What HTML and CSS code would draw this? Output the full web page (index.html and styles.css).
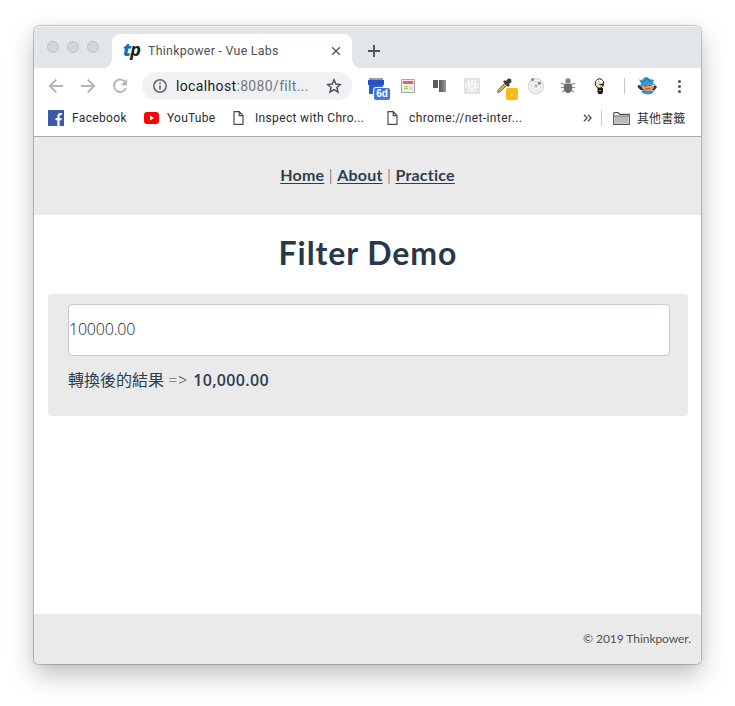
FILE: index.html
```html
<!DOCTYPE html>
<html lang="zh-Hant">
<head>
<meta charset="utf-8">
<title>Thinkpower - Vue Labs</title>
<link rel="stylesheet" href="styles.css">
</head>
<body>
<div class="window">
  <div class="tabstrip">
    <div class="lights"><i></i><i></i><i></i></div>
    <div class="tab">
      <span class="favicon"><b>t</b>p</span>
      <span class="tab-title">Thinkpower - Vue Labs</span>
      <svg class="tab-close" width="10" height="10" viewBox="0 0 10 10"><path d="M1.2 1.2l7.6 7.6M8.8 1.2L1.2 8.8" stroke="#5a5e63" stroke-width="1.5"/></svg>
    </div>
    <svg class="new-tab" width="14" height="14" viewBox="0 0 14 14"><path d="M7 1v12M1 7h12" stroke="#4e5256" stroke-width="1.9"/></svg>
  </div>
  <div class="toolbar">
    <div class="slot"><svg width="16" height="16" viewBox="0 0 16 16"><path d="M15 8H2M8.3 1.5L1.8 8l6.5 6.5" fill="none" stroke="#b3b5b7" stroke-width="1.9"/></svg></div>
    <div class="slot"><svg width="16" height="16" viewBox="0 0 16 16"><path d="M1 8h13M7.7 1.5L14.2 8l-6.5 6.5" fill="none" stroke="#b3b5b7" stroke-width="1.9"/></svg></div>
    <div class="slot"><svg width="16" height="16" viewBox="0 0 16 16"><path d="M13.6 4.7A6.2 6.2 0 1 0 14 10" fill="none" stroke="#b3b5b7" stroke-width="1.9"/><path d="M15 1v6.2H8.8z" fill="#b3b5b7"/></svg></div>
    <div class="omnibox">
      <svg width="14" height="14" viewBox="0 0 14 14"><circle cx="7" cy="7" r="6.2" fill="none" stroke="#5f6368" stroke-width="1.5"/><path d="M7 6.2v4.3M7 3.5v1.6" stroke="#5f6368" stroke-width="1.6"/></svg>
      <span class="url"><b>localhost</b>:8080/filt...</span>
      <svg class="star" width="16" height="16" viewBox="0 0 16 16"><path d="M8 1.8l1.8 4.3 4.6.4-3.5 3 1.1 4.6L8 11.7l-4 2.4 1.1-4.6-3.500-3 4.600-.4z" fill="none" stroke="#505459" stroke-width="1.5"/></svg>
    </div>
    <div class="extensions">
      <div class="slot"><svg width="16" height="16" viewBox="0 0 16 16"><path d="M1 0h14v3H1z" fill="#92969f"/><path d="M2 0v2M5 0v2M8 0v2M11 0v2M14 0v2" stroke="#a4a7ae"/><path d="M0 2h16v5H0z" fill="#2450c8"/><path d="M1 7h14v9H1z" fill="#2c5bd2"/></svg><span class="badge days">6d</span></div>
      <div class="slot"><svg width="14" height="14" viewBox="0 0 14 14"><path d="M.5.5h13v13H.5z" fill="#f1f1f1" stroke="#a6a6a6"/><path d="M2 2h10v3H2z" fill="#ff5555"/><path d="M3 7.5h4M3 9.5h4" stroke="#8fd83c"/><path d="M8 7h4v4H8z" fill="#dedede"/></svg></div>
      <div class="slot"><svg width="14" height="14" viewBox="0 0 14 14"><defs><linearGradient id="bar"><stop stop-color="#555"/><stop offset="1" stop-color="#999"/></linearGradient></defs><path d="M0 1h5v8H0z" fill="#5c5c5c"/><path d="M6 1h7v12H6z" fill="url(#bar)"/></svg></div>
      <div class="slot"><svg width="16" height="16" viewBox="0 0 16 16"><path d="M0 0h16v16H0z" fill="#e2e2e2"/><g fill="none" stroke="#fff" stroke-width=".9"><ellipse cx="8" cy="8" rx="6.5" ry="2.5"/><ellipse cx="8" cy="8" rx="6.5" ry="2.5" transform="rotate(60 8 8)"/><ellipse cx="8" cy="8" rx="6.5" ry="2.5" transform="rotate(120 8 8)"/></g><circle cx="8" cy="8" r="1.2" fill="#fff"/></svg></div>
      <div class="slot"><svg width="16" height="16" viewBox="0 0 16 16"><path d="M1.5 14.5l1-3L9 5l2 2-6.5 6.5z" fill="#d8ae4a" stroke="#6d6d6d"/><path d="M7 3.5l1.5-1.3L10 3l2-2.5 3 .5.5 3L13 6l.7 1.5L12 9z" fill="#3c3c3c"/></svg><span class="badge dot">.</span></div>
      <div class="slot"><svg width="16" height="16" viewBox="0 0 16 16"><g fill="none" stroke="#cdcdcd"><circle cx="8" cy="8" r="7.3" stroke-width="1.2"/><circle cx="8" cy="8" r="4.5"/></g><circle cx="8" cy="8" r="2" fill="#c0c0c0"/><circle cx="4.5" cy="1.7" r="1.6" fill="#8c8c8c"/><circle cx="11.3" cy="5.2" r="1.6" fill="#858585"/></svg></div>
      <div class="slot"><svg width="16" height="16" viewBox="0 0 16 16"><path d="M1 5l4 2M15 5l-4 2M1 9.5h4M15 9.5h-4M2 14l3-2M14 14l-3-2" stroke="#8a8a8a" stroke-width="1.1"/><circle cx="8" cy="3" r="2.7" fill="#858585"/><ellipse cx="8" cy="9.8" rx="4.3" ry="5.2" fill="#6c6c6c"/><path d="M4.5 5.5h7" stroke="#bbb"/></svg></div>
      <div class="slot"><svg width="16" height="16" viewBox="0 0 16 16"><path d="M5.500 10h5.500v4l-1 2H6.500l-1-2z" fill="#191716"/><ellipse cx="7.500" cy="5.500" rx="4.200" ry="4.700" fill="#f0dfaf" stroke="#1b1917"/><path d="M4.500 2.500l3-1 3 1-1 2.500H5z" fill="#fff"/><path d="M6.500 5.500l2 .7 3-1v2l-3 .3z" fill="#1b1917"/><path d="M6 3.500l1.500.5" stroke="#e34037"/><path d="M7 12h2v1H7z" fill="#ba9b6d"/></svg></div>
    </div>
    <div class="rule"></div>
    <svg class="avatar" width="20" height="20" viewBox="0 0 20 20"><path d="M4 16l4-3 6 1 3 2q-6 5-13 0z" fill="#3b8fc4"/><path d="M.5 9.500q3-1.500 4 1l3 4-4-.5q-3-2-3-4.500zM14 13l4-4 2 2-3 4z" fill="#233b61"/><path d="M5 9l10-1 2 4-4 3H9l-4-3z" fill="#ed9b61"/><path d="M2 3.500l3 .5 2-2.500 3-.5 3 2 4 1-1 3 3 2.500-5-1-5 1.500-6 .5 1-3z" fill="#3e96cd"/><path d="M5 6l5-3 4 3" fill="none" stroke="#246b9b"/><path d="M8 12h6l-2 1.500H9z" fill="#d65325"/><path d="M8 10h1.500M12 9.500h1.500" stroke="#543022"/></svg>
    <div class="menu"><i></i><i></i><i></i></div>
  </div>
  <div class="bookmarks">
    <div class="bookmark fb"><svg width="16" height="16" viewBox="0 0 16 16"><path d="M0 0h16v16H0z" fill="#3b5ba9"/><path d="M10.5 16V6.300q0-2.300 2.500-2.300h1M7.500 9.200h6" stroke="#fff" stroke-width="2.2" fill="none"/></svg><span>Facebook</span></div>
    <div class="bookmark yt"><svg width="15" height="12" viewBox="0 0 15 12"><rect width="15" height="12" rx="3" fill="#f00"/><path d="M6 3.5v5L10 6z" fill="#fff"/></svg><span>YouTube</span></div>
    <div class="bookmark inspect"><svg width="11" height="14" viewBox="0 0 11 14"><path d="M1 .7h5.300L10 4.500v8.800H1zM6.200.7v4H10" fill="none" stroke="#4a4d50" stroke-width="1.2"/></svg><span>Inspect with Chro...</span></div>
    <div class="bookmark net"><svg width="11" height="14" viewBox="0 0 11 14"><path d="M1 .7h5.300L10 4.500v8.800H1zM6.200.7v4H10" fill="none" stroke="#4a4d50" stroke-width="1.2"/></svg><span>chrome://net-inter...</span></div>
    <svg class="more" width="9" height="8" viewBox="0 0 9 8"><path d="M1 .8L4 4 1 7.200M5 .8L8 4 5 7.200" fill="none" stroke="#505459" stroke-width="1.4"/></svg>
    <div class="rule"></div>
    <svg class="folder" width="17" height="13" viewBox="0 0 17 13"><path d="M.6 12.400V1.600q0-1 1-1h3.600l1.500 1.800h9.700v10z" fill="#fff" stroke="#505459" stroke-width="1.1"/><path d="M1.500 4.500h14v7h-14z" fill="#b9babb"/><path d="M1 4h15" stroke="#505459"/></svg>
    <span class="others">其他書籤</span>
  </div>
  <div class="page">
    <nav class="nav"><a>Home</a><span>|</span><a>About</a><span>|</span><a>Practice</a></nav>
    <main class="main">
      <h1>Filter Demo</h1>
      <section class="card">
        <div class="field">10000.00</div>
        <p>轉換後的結果 <span>=&gt;</span> <b>10,000.00</b></p>
      </section>
    </main>
    <footer class="footer">© 2019 Thinkpower.</footer>
  </div>
</div>
</body>
</html>
```
FILE: styles.css
```css
* { box-sizing: border-box; }
body { margin: 0; height: 706px; padding: 26px 34px; background: #fff; overflow: hidden; }
svg { display: block; flex: none; }
.window {
  width: 667px; height: 638px; display: flex; flex-direction: column;
  border-radius: 5px; overflow: hidden; background: #fff;
  box-shadow: 0 0 0 1px rgba(0,0,0,.18), 0 11px 26px rgba(0,0,0,.25), 0 0 10px rgba(0,0,0,.05);
  font-family: Roboto, "Noto Sans CJK TC", sans-serif;
}
.tabstrip { height: 42px; flex: none; display: flex; align-items: flex-end; background: #e2e6e9; box-shadow: inset 0 1px #f1f3f4; }
.lights { display: flex; gap: 8px; margin: 0 13px 15px 13px; }
.lights i { width: 12px; height: 12px; border-radius: 50%; background: #d5d5d5; border: 1px solid #c3c3c3; }
.tab { position: relative; width: 240px; height: 34px; display: flex; align-items: center; padding: 0 11px 1px; background: #fff; border-radius: 8px 8px 0 0; }
.tab::before, .tab::after { content: ""; position: absolute; bottom: 0; width: 8px; height: 8px; }
.tab::before { left: -8px; background: radial-gradient(circle at 0 0, transparent 7.5px, #fff 8px); }
.tab::after { right: -8px; background: radial-gradient(circle at 100% 0, transparent 7.5px, #fff 8px); }
.tab-close { margin-top: 1px; }
.favicon { width: 25px; font: italic 700 18px/22px "Open Sans", sans-serif; letter-spacing: -1px; color: #231b1a; margin-top: -3px; }
.favicon b { color: #0876c4; }
.tab-title { flex: 1; font-size: 12.4px; letter-spacing: .27px; color: #4c5054; }
.new-tab { margin: 0 0 10px 15px; }
.toolbar { height: 36px; flex: none; display: flex; align-items: center; padding-left: 6px; }
.slot { position: relative; width: 32px; height: 32px; display: flex; align-items: center; justify-content: center; }
.omnibox { width: 210px; height: 28px; margin: 0 8px 0 6px; display: flex; align-items: center; padding: 0 10px 0 11px; border-radius: 14px; background: #eff1f3; }
.url { flex: 1; margin-left: 9px; font-size: 14px; letter-spacing: .35px; color: #72777c; white-space: nowrap; }
.url b { font-weight: 400; color: #202124; }
.extensions { display: flex; }
.badge { position: absolute; color: #fff; border-radius: 2px; text-align: center; }
.days { left: 14px; top: 18px; width: 16px; height: 12px; background: #3b78e0; box-shadow: 0 0 0 1px #fff; font: 700 10px/12px "Liberation Sans", sans-serif; }
.dot { left: 18px; top: 18px; width: 12px; height: 12px; background: #f6b916; font: 700 10px/9px "Liberation Sans", sans-serif; }
.rule { width: 1px; height: 16px; background: #c5c8ca; flex: none; }
.toolbar .rule { margin-left: 8px; }
.avatar { margin-left: 12px; }
.menu { margin-left: 21px; display: flex; flex-direction: column; gap: 2px; }
.menu i { width: 3px; height: 3px; border-radius: 50%; background: #505459; }
.bookmarks { height: 33px; flex: none; display: flex; align-items: center; padding: 0 0 4px 14px; border-bottom: 1px solid #acacac; font-size: 12px; letter-spacing: .34px; color: #292c30; white-space: nowrap; }
.bookmark { display: flex; align-items: center; flex: none; }
.fb { width: 96px; gap: 8px; }
.yt { width: 89px; gap: 8px; letter-spacing: .24px; }
.inspect { width: 154px; gap: 11px; }
.net { width: 196px; gap: 11px; letter-spacing: .4px; }
.more { margin-right: 9px; }
.folder { margin: 0 7px 0 11px; }
.others { font-size: 12px; letter-spacing: .1px; margin-top: -2px; }
.page { flex: 1; display: flex; flex-direction: column; font-family: Lato, "Noto Sans CJK TC", sans-serif; font-variant-ligatures: none; color: #2c3e50; }
.nav { height: 78px; flex: none; display: flex; justify-content: center; gap: 4.5px; padding-top: 27px; background: #eaeaea; font-size: 16px; line-height: 22px; }
.nav a { font-weight: 700; letter-spacing: .22px; text-decoration: underline; text-underline-offset: 2px; text-decoration-thickness: 1px; }
.nav span { font-weight: 300; }
.main { flex: 1; padding: 16px 13px 0 14px; }
h1 { margin: 0; height: 63px; text-align: center; font-size: 32px; line-height: 44px; font-weight: 700; letter-spacing: .95px; color: #273849; }
.card { height: 122px; padding: 10px 18px 0 20px; border-radius: 4px; background: #eaeaea; }
.field { height: 52px; border: 1px solid #c3cbd5; border-radius: 4px; background: #fff; font: 300 16px/48px "Open Sans", sans-serif; letter-spacing: -.2px; color: #222; }
.card p { margin: 11px 0 0; font-size: 16px; line-height: 26px; font-family: "Open Sans", "Noto Sans CJK TC", sans-serif; font-weight: 400; white-space: nowrap; }
.card p span { font-weight: 300; letter-spacing: .8px; }
.card p b { font-weight: 600; letter-spacing: .32px; margin-left: 1px; }
.footer { height: 50px; flex: none; padding-right: 10px; text-align: right; background: #eaeaea; font-size: 12px; line-height: 50px; letter-spacing: -.05px; color: #505050; }
```
